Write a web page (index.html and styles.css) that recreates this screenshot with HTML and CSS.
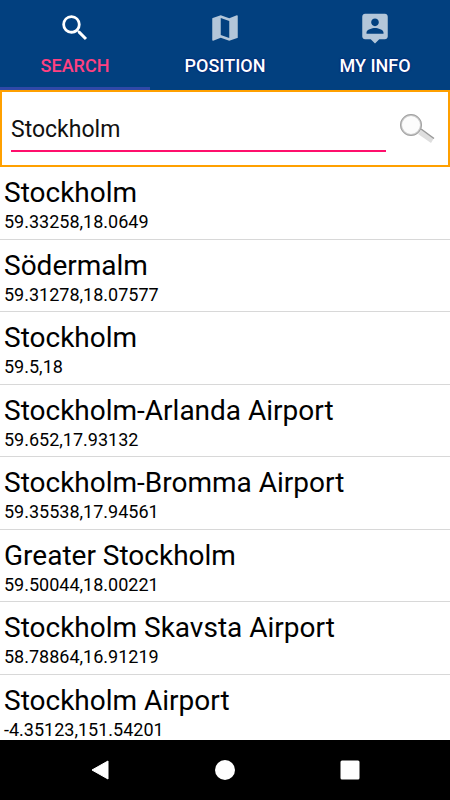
FILE: index.html
```
<!DOCTYPE html>
<html lang="en">
<head>
    <meta charset="UTF-8">
    <meta name="viewport" content="width=device-width, initial-scale=1.0">
    <title>Search</title>
    <link rel="stylesheet" href="styles.css">
</head>
<body>

    <nav class="tabs">
        <a href="#search" class="tab active">
            <svg viewBox="0 0 24 24"><path d="M15.5 14h-.79l-.28-.27A6.47 6.47 0 0 0 16 9.5 6.5 6.5 0 1 0 9.5 16c1.61 0 3.09-.59 4.23-1.57l.27.28v.79l5 4.99L20.49 19l-4.99-5zm-6 0C7.01 14 5 11.99 5 9.5S7.01 5 9.5 5 14 7.01 14 9.5 11.99 14 9.5 14z"/></svg>
            <span>SEARCH</span>
        </a>
        <a href="#position" class="tab">
            <svg viewBox="0 0 24 24"><path d="M20.5 3l-.16.03L15 5.1 9 3 3.36 4.9c-.21.07-.36.25-.36.48V20.5c0 .28.22.5.5.5l.16-.03L9 18.9l6 2.1 5.64-1.9c.21-.07.36-.25.36-.48V3.5c0-.28-.22-.5-.5-.5zM15 19l-6-2.11V5l6 2.11V19z"/></svg>
            <span>POSITION</span>
        </a>
        <a href="#info" class="tab">
            <svg viewBox="0 0 24 24"><path d="M19 2H5c-1.11 0-2 .9-2 2v14c0 1.1.89 2 2 2h4l3 3 3-3h4c1.1 0 2-.9 2-2V4c0-1.1-.9-2-2-2zm-7 3.3c1.49 0 2.7 1.21 2.7 2.7 0 1.49-1.21 2.7-2.7 2.7-1.49 0-2.7-1.21-2.7-2.7 0-1.49 1.21-2.7 2.7-2.7zM18 16H6v-.9c0-2 4-3.1 6-3.1s6 1.1 6 3.1v.9z"/></svg>
            <span>MY INFO</span>
        </a>
    </nav>

    <form class="search-box">
        <input type="text" id="query" value="Stockholm" aria-label="Search for a place">
        <button type="button" aria-label="Search">
            <svg viewBox="0 0 36 32">
                <path d="M18 21l4-5 12 9-3 5z" fill="#dedede"/>
                <path d="M21 16l13 9.500" stroke="#999" stroke-width="1.500"/>
                <circle cx="11" cy="12" r="10" fill="#fcfcfc" stroke="#cacaca" stroke-width="2"/>
                <circle cx="11" cy="12" r="10.5" fill="none" stroke="#a0a0a0" stroke-width="1"/>
            </svg>
        </button>
    </form>

    <ul class="places">
        <li><h2>Stockholm</h2><p>59.33258,18.0649</p></li>
        <li><h2>Södermalm</h2><p>59.31278,18.07577</p></li>
        <li><h2>Stockholm</h2><p>59.5,18</p></li>
        <li><h2>Stockholm-Arlanda Airport</h2><p>59.652,17.93132</p></li>
        <li><h2>Stockholm-Bromma Airport</h2><p>59.35538,17.94561</p></li>
        <li><h2>Greater Stockholm</h2><p>59.50044,18.00221</p></li>
        <li><h2>Stockholm Skavsta Airport</h2><p>58.78864,16.91219</p></li>
        <li><h2>Stockholm Airport</h2><p>-4.35123,151.54201</p></li>
    </ul>

    <div class="system-bar">
        <button type="button" aria-label="Back">
            <svg viewBox="0 0 20 20"><path d="M18 1v18L2 10z"/></svg>
        </button>
        <button type="button" aria-label="Home">
            <svg viewBox="0 0 20 20"><circle cx="10" cy="10" r="10"/></svg>
        </button>
        <button type="button" aria-label="Recent apps">
            <svg viewBox="0 0 20 20"><rect width="19" height="19" x="0.5" y="0.5" rx="1.5"/></svg>
        </button>
    </div>

</body>
</html>
```

FILE: styles.css
```
* {
    box-sizing: border-box;
}
body {
    display: flex;
    flex-direction: column;
    height: 100vh;
    margin: 0;
    font-family: Roboto, sans-serif;
    color: #000;
    background: #fff;
}
button {
    padding: 0;
    border: none;
    background: none;
    cursor: pointer;
}
svg {
    display: block;
}

/* tabs */
.tabs {
    display: flex;
    flex-shrink: 0;
    background: #02407f;
}
.tab {
    flex: 1;
    display: flex;
    flex-direction: column;
    align-items: center;
    gap: 11px;
    padding: 11px 0;
    border-bottom: 3px solid #02407f;
    color: #fff;
    font-size: 18px;
    font-weight: 500;
    line-height: 20px;
    text-decoration: none;
    text-shadow: 0 0 2px #00006e;
}
.tab svg {
    width: 34px;
    height: 34px;
    fill: #b3c6d9;
}
.tab.active {
    border-color: #3048a8;
    color: #ff4081;
    text-shadow: none;
}
.tab.active svg {
    fill: #fff;
}

/* search field */
.search-box {
    display: flex;
    flex-shrink: 0;
    align-items: center;
    gap: 14px;
    padding: 14px 12px 13px 9px;
    border: 2px solid #ffa000;
}
.search-box input {
    flex: 1;
    min-width: 0;
    height: 46px;
    padding: 2px 0 0;
    border: none;
    border-bottom: 2px solid #ff0f6c;
    outline: none;
    background: none;
    font-family: inherit;
    font-size: 23px;
    color: #111;
}
.search-box svg {
    width: 36px;
    height: 32px;
}

/* results */
.places {
    flex: 1;
    min-height: 0;
    margin: 0;
    padding: 0;
    overflow: hidden;
    list-style: none;
}
.places li {
    height: 73px;
    padding: 8px 4px 0;
    border-bottom: 1px solid #d8d8d8;
}
.places li:nth-child(even) {
    height: 72px;
}
.places h2 {
    margin: 0;
    font-size: 28px;
    font-weight: 400;
    line-height: 36px;
}
.places p {
    margin: 0;
    font-size: 18px;
    line-height: 22px;
}

/* system buttons */
.system-bar {
    display: flex;
    flex-shrink: 0;
    justify-content: center;
    gap: 105px;
    padding: 20px 0;
    background: #000;
}
.system-bar svg {
    width: 20px;
    height: 20px;
    fill: #fff;
    stroke: #fff;
    stroke-width: 0;
}
.system-bar path {
    stroke-width: 1;
    stroke-linejoin: round;
}
```
